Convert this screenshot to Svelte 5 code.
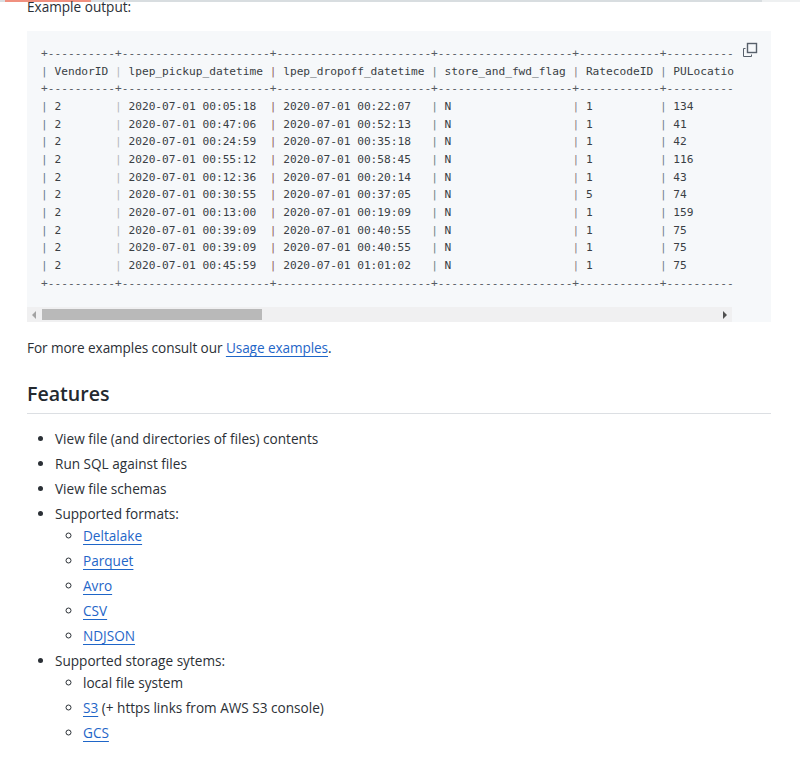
<script lang="ts">
  const rows = [
    ['2', '2020-07-01 00:05:18', '2020-07-01 00:22:07', 'N', '1', '134'],
    ['2', '2020-07-01 00:47:06', '2020-07-01 00:52:13', 'N', '1', '41'],
    ['2', '2020-07-01 00:24:59', '2020-07-01 00:35:18', 'N', '1', '42'],
    ['2', '2020-07-01 00:55:12', '2020-07-01 00:58:45', 'N', '1', '116'],
    ['2', '2020-07-01 00:12:36', '2020-07-01 00:20:14', 'N', '1', '43'],
    ['2', '2020-07-01 00:30:55', '2020-07-01 00:37:05', 'N', '5', '74'],
    ['2', '2020-07-01 00:13:00', '2020-07-01 00:19:09', 'N', '1', '159'],
    ['2', '2020-07-01 00:39:09', '2020-07-01 00:40:55', 'N', '1', '75'],
    ['2', '2020-07-01 00:39:09', '2020-07-01 00:40:55', 'N', '1', '75'],
    ['2', '2020-07-01 00:45:59', '2020-07-01 01:01:02', 'N', '1', '75']
  ];
  const widths = [8, 20, 21, 18, 10, 9];
  const header = ['VendorID', 'lpep_pickup_datetime', 'lpep_dropoff_datetime', 'store_and_fwd_flag', 'RatecodeID', 'PULocatio'];
  const rule = '+' + widths.slice(0, 5).map((w) => '-'.repeat(w + 2)).join('+') + '+' + '-'.repeat(10);
  const lines = [header, ...rows];
  const formats = ['Deltalake', 'Parquet', 'Avro', 'CSV', 'NDJSON'];
</script>

<div class="topbar"><span class="progress"></span><span class="tail"></span></div>
<main>
  <p class="intro">Example output:</p>

  <div class="code">
    <!-- the pipes come out a different tint per column in the reference -->
    <pre><span class="rule">{rule}</span>{'\n'}{#each lines as cells, n}{#each cells as c, i}<span class="p{i}">|</span> {i < 5 ? c.padEnd(widths[i]) + ' ' : c}{/each}{'\n'}{#if n === 0}<span class="rule">{rule}</span>{'\n'}{/if}{/each}<span class="rule">{rule}</span></pre>
    <button class="copy" aria-label="Copy">
      <svg width="16" height="16" viewBox="0 0 16 16" fill="none" stroke="#57606a" stroke-width="1">
        <path d="M1.5 6.5h2M1.5 6.5v8h8v-2" />
        <rect x="5.5" y="1.5" width="9" height="9" stroke-width="1.4" />
      </svg>
    </button>
    <div class="scrollbar">
      <span class="arrow left"></span>
      <span class="thumb"></span>
      <span class="arrow right"></span>
    </div>
  </div>

  <p class="more">For more examples consult our <a href="#usage">Usage examples</a>.</p>

  <h2>Features</h2>

  <ul>
    <li>View file (and directories of files) contents</li>
    <li>Run SQL against files</li>
    <li>View file schemas</li>
    <li>
      Supported formats:
      <ul>
        {#each formats as f}
          <li><a href="#{f}">{f}</a></li>
        {/each}
      </ul>
    </li>
    <li>
      Supported storage sytems:
      <ul>
        <li>local file system</li>
        <li><a href="#s3">S3</a> (+ https links from AWS S3 console)</li>
        <li><a href="#gcs">GCS</a></li>
      </ul>
    </li>
  </ul>
</main>

<style>
  :global(body) {
    background: #fff;
    overflow: hidden;
  }
  .topbar {
    display: flex;
    height: 2px;
    background: #d8dde0;
  }
  .progress {
    width: 86px;
    margin-left: 5px;
    background: #f0907f;
  }
  .tail {
    width: 38px;
    margin-left: auto;
    background: #eef0f1;
  }
  main {
    padding: 0 29px 0 27px;
    font-family: "Open Sans", "Noto Sans", sans-serif;
    font-size: 13.6px;
    line-height: 22px;
    color: #2b3036;
  }
  p {
    margin: 0;
  }
  .intro {
    margin-top: -6px;
  }
  .code {
    position: relative;
    margin-top: 13px;
    height: 291px;
    background: #f6f8fa;
  }
  pre {
    margin: 0;
    padding: 14px 0 0 14px;
    font-family: "DejaVu Sans Mono", monospace;
    font-size: 11.18px;
    line-height: 17.67px;
    color: #3a3f45;
  }
  .rule {
    color: #555b61;
  }
  .p0 {
    color: #64778c;
  }
  .p1 {
    color: #b4b8bc;
  }
  .p2 {
    color: #8f5a5c;
  }
  .p3 {
    color: #6c8486;
  }
  .p4 {
    color: #8a7f86;
  }
  .p5 {
    color: #70808c;
  }
  .copy {
    position: absolute;
    top: 11px;
    right: 13px;
    padding: 0;
    border: 0;
    background: none;
    line-height: 0;
  }
  .scrollbar {
    position: absolute;
    left: 0;
    bottom: 0;
    width: 705px;
    height: 15px;
    display: flex;
    align-items: center;
    background: #f0f0f1;
  }
  .thumb {
    width: 220px;
    height: 11px;
    margin-left: 6px;
    background: #b9b9b9;
  }
  .arrow {
    width: 0;
    height: 0;
    border-top: 4px solid transparent;
    border-bottom: 4px solid transparent;
  }
  .arrow.left {
    margin-left: 5px;
    border-right: 4px solid #a3a3a3;
  }
  .arrow.right {
    margin-left: auto;
    margin-right: 5px;
    border-left: 4px solid #505050;
  }
  .more {
    margin-top: 15px;
    letter-spacing: -0.08px;
  }
  a {
    color: #1f66c8;
    text-decoration: underline;
    text-underline-offset: 3px;
  }
  h2 {
    margin: 21px 0 0;
    padding-bottom: 5px;
    border-bottom: 1px solid #dcdfe3;
    font-size: 19.6px;
    line-height: 28px;
    font-weight: 600;
    color: #24292f;
  }
  ul {
    margin: 14px 0 0;
    padding-left: 28px;
    list-style: disc;
  }
  li + li {
    margin-top: 3px;
  }
  li ul {
    margin: 0;
    list-style: circle;
  }
</style>
